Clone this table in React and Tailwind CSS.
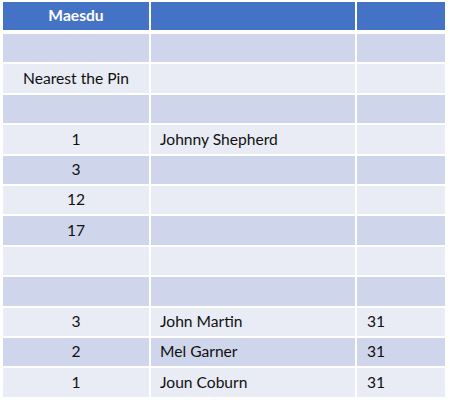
import React from "react";

const rows = [
  ["", "", ""],
  ["Nearest the Pin", "", ""],
  ["", "", ""],
  ["1", "Johnny Shepherd", ""],
  ["3", "", ""],
  ["12", "", ""],
  ["17", "", ""],
  ["", "", ""],
  ["", "", ""],
  ["3", "John Martin", "31"],
  ["2", "Mel Garner", "31"],
  ["1", "Joun Coburn", "31"],
];

const App = () => {
  return (
    <div className="w-[450px] h-[405px] bg-white pt-[2px] pl-[3px] font-['Lato',sans-serif] text-[15.6px] text-[#111]">
      <div className="w-[442px] flex flex-col">
        <div className="flex gap-[2px] h-[28px] mb-[4px]">
          <div className="w-[146px] bg-[#4472c4] text-white font-bold flex items-center justify-center">
            Maesdu
          </div>
          <div className="w-[204px] bg-[#4472c4]"></div>
          <div className="w-[88px] bg-[#4472c4]"></div>
        </div>
        <div className="flex flex-col gap-[2px]">
          {rows.map((r, i) => {
            const bg = i % 2 === 0 ? "bg-[#cfd5ea]" : "bg-[#e9ebf5]";
            return (
              <div key={i} className="flex gap-[2px] h-[28.4px]">
                <div className={`w-[146px] ${bg} flex items-center justify-center`}>
                  {r[0]}
                </div>
                <div className={`w-[204px] ${bg} flex items-center pl-[9px]`}>
                  {r[1]}
                </div>
                <div className={`w-[88px] ${bg} flex items-center pl-[10px]`}>
                  {r[2]}
                </div>
              </div>
            );
          })}
        </div>
      </div>
    </div>
  );
};

export default App;
